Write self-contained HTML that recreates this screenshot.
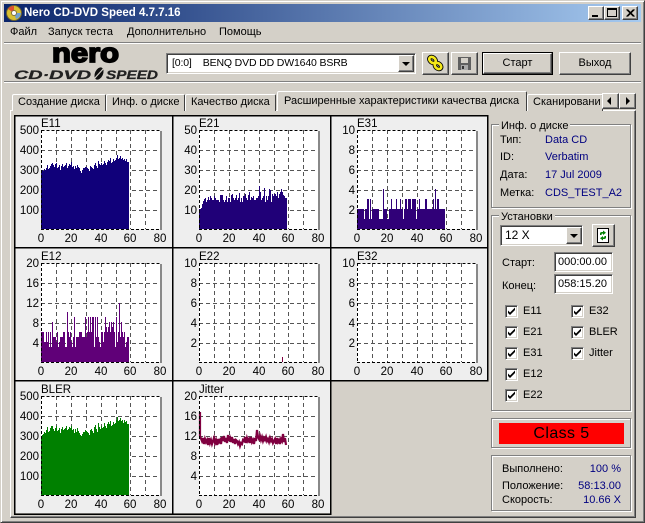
<!DOCTYPE html>
<html><head><meta charset="utf-8"><style>
html,body{margin:0;padding:0;background:#d4d0c8;}
body{width:645px;height:523px;position:relative;overflow:hidden;font:11px/13px "Liberation Sans",sans-serif;color:#000;}
div,span.a{position:absolute;box-sizing:border-box;white-space:nowrap;}
.rai{background:#d4d0c8;border:1px solid;border-color:#fff #404040 #404040 #fff;box-shadow:inset -1px -1px 0 #808080;}
.sun{background:#fff;border:1px solid;border-color:#808080 #fff #fff #808080;box-shadow:inset 1px 1px 0 #404040,inset -1px -1px 0 #d4d0c8;}
.grp{border:1px solid #808080;box-shadow:1px 1px 0 #fff,inset 1px 1px 0 #fff;}
.leg{background:#d4d0c8;padding:0 2px;}
.tab{background:#d4d0c8;border-left:1px solid #fff;border-top:1px solid #fff;border-right:1px solid #404040;border-radius:2px 2px 0 0;padding-left:5px;line-height:15px;overflow:hidden;}
.sep{left:4px;width:637px;height:2px;background:#808080;border-bottom:1px solid #fff;}
.cb{width:13px;height:13px;background:#fff;border:1px solid;border-color:#808080 #fff #fff #808080;box-shadow:inset 1px 1px 0 #404040,inset -1px -1px 0 #d4d0c8;}
.blue{color:#000080;}
.t{font-size:11.5px;fill:#000;font-family:"Liberation Sans",sans-serif;}
.e{text-anchor:end}.m{text-anchor:middle}
.bar{shape-rendering:crispEdges}
</style></head><body>
<div style="left:0;top:0;width:645px;height:523px;border:1px solid;border-color:#d4d0c8 #404040 #404040 #d4d0c8;box-shadow:inset 1px 1px 0 #fff,inset -1px -1px 0 #808080;"></div>

<div style="left:4px;top:4px;width:637px;height:18px;background:linear-gradient(90deg,#0a246a,#a6caf0);"></div>
<svg style="position:absolute;left:5px;top:4px" width="18" height="18" viewBox="0 0 18 18"><circle cx="9" cy="9" r="7.5" fill="#d8c030" stroke="#6a6030"/><path d="M9 9L3 5A7 7 0 0 1 9 2Z" fill="#e05030"/><path d="M9 9L16 9A7 7 0 0 1 11 15Z" fill="#70a0d0"/><circle cx="9" cy="9" r="2.5" fill="#fff" stroke="#807040"/></svg>
<div style="left:24px;top:6px;color:#fff;font:bold 11.5px/14px 'Liberation Sans',sans-serif;">Nero CD-DVD Speed 4.7.7.16</div>
<div class="rai" style="left:588px;top:6px;width:16px;height:14px;"><div style="left:3px;top:8px;width:6px;height:2px;background:#000"></div></div>
<div class="rai" style="left:604px;top:6px;width:16px;height:14px;"><div style="left:2px;top:1px;width:10px;height:9px;border:1px solid #000;border-top-width:2px"></div></div>
<div class="rai" style="left:622px;top:6px;width:16px;height:14px;"><svg style="position:absolute;left:3px;top:2px" width="9" height="8"><path d="M0.5 0.5L7.5 7.5M1.5 .5L8.5 7.5M7.5 .5L.5 7.5M8.5 .5L1.5 7.5" stroke="#000" fill="none"/></svg></div>

<div style="left:10px;top:26px;">Файл</div>
<div style="left:48px;top:26px;">Запуск теста</div>
<div style="left:127px;top:26px;">Дополнительно</div>
<div style="left:219px;top:26px;">Помощь</div>
<div class="sep" style="top:42px;"></div>

<svg style="position:absolute;left:10px;top:42px" width="160" height="40">
<text x="42" y="20" textLength="67" lengthAdjust="spacingAndGlyphs" style="font:bold 27px 'Liberation Sans',sans-serif;stroke:#000;stroke-width:1.7px;">nero</text>
<text x="4" y="37" textLength="77" lengthAdjust="spacingAndGlyphs" style="font:italic bold 12px 'Liberation Sans',sans-serif;fill:#222;stroke:#222;stroke-width:.3px">CD·DVD</text>
<ellipse cx="89" cy="31.5" rx="4" ry="6.5" transform="rotate(25 89 31.5)" fill="#111"/>
<path d="M84 37L94 26" stroke="#d4d0c8" stroke-width="1.2"/>
<text x="96" y="37" textLength="52" lengthAdjust="spacingAndGlyphs" style="font:italic bold 12px 'Liberation Sans',sans-serif;fill:#222;stroke:#222;stroke-width:.3px">SPEED</text>
</svg>
<div class="sep" style="top:81px;"></div>

<div class="sun" style="left:166px;top:53px;width:250px;height:21px;"></div>
<div style="left:172px;top:57px;font-size:10.5px;letter-spacing:-.15px;">[0:0]&nbsp;&nbsp;&nbsp; BENQ DVD DD DW1640 BSRB</div>
<div class="rai" style="left:398px;top:55px;width:16px;height:17px;"><div style="left:3px;top:6px;border:4px solid transparent;border-top:4px solid #000;border-bottom:0"></div></div>
<div class="rai" style="left:422px;top:52px;width:27px;height:23px;"></div>
<svg style="position:absolute;left:426px;top:54px" width="20" height="19"><ellipse cx="6.5" cy="6" rx="3.6" ry="2.6" transform="rotate(40 6.5 6)" fill="none" stroke="#000" stroke-width="4.4"/><ellipse cx="12" cy="12" rx="3.6" ry="2.6" transform="rotate(40 12 12)" fill="none" stroke="#000" stroke-width="4.4"/><ellipse cx="6.5" cy="6" rx="3.6" ry="2.6" transform="rotate(40 6.5 6)" fill="none" stroke="#f4e818" stroke-width="2.6"/><ellipse cx="12" cy="12" rx="3.6" ry="2.6" transform="rotate(40 12 12)" fill="none" stroke="#f4e818" stroke-width="2.6"/></svg>
<div class="rai" style="left:451px;top:52px;width:27px;height:23px;"></div>
<svg style="position:absolute;left:458px;top:57px" width="14" height="14" shape-rendering="crispEdges"><path d="M0 0H13V13H0Z" fill="#606060"/><path d="M3 1H10V6H3Z" fill="#d4d0c8"/><path d="M3 8H10V13H3Z" fill="#a8a8a8"/><path d="M4 9H6V12H4Z" fill="#333"/></svg>
<div style="left:482px;top:52px;width:71px;height:23px;border:1px solid #000;"></div>
<div class="rai" style="left:483px;top:53px;width:69px;height:21px;text-align:center;line-height:19px;">Старт</div>
<div class="rai" style="left:559px;top:52px;width:72px;height:23px;text-align:center;line-height:21px;">Выход</div>

<!-- tab panel -->
<div style="left:10px;top:110px;width:626px;height:408px;border:1px solid;border-color:#fff #404040 #404040 #fff;box-shadow:inset -1px -1px 0 #808080;"></div>
<div class="tab" style="left:12px;top:94px;width:94px;height:17px;">Создание диска</div>
<div class="tab" style="left:106px;top:94px;width:79px;height:17px;">Инф. о диске</div>
<div class="tab" style="left:185px;top:94px;width:91px;height:17px;">Качество диска</div>
<div class="tab" style="left:277px;top:91px;width:250px;height:20px;padding-left:6px;line-height:19px;z-index:2;">Расширенные характеристики качества диска</div>
<div class="tab" style="left:527px;top:94px;width:76px;height:17px;">Сканировани</div>
<div class="rai" style="left:602px;top:93px;width:17px;height:16px;"><div style="left:4px;top:3px;border:4px solid transparent;border-right:4px solid #000;border-left:0"></div></div>
<div class="rai" style="left:619px;top:93px;width:17px;height:16px;"><div style="left:6px;top:3px;border:4px solid transparent;border-left:4px solid #000;border-right:0"></div></div>

<!-- charts -->
<svg style="position:absolute;left:0;top:0" width="645" height="523">
<defs>
<g id="grid" fill="none" stroke="#555" stroke-dasharray="4 3" shape-rendering="crispEdges">
<path d="M15.5 0V99M30.5 0V99M45.5 0V99M60.5 0V99M75.5 0V99M89.5 0V99M104.5 0V99M0 20.5H119M0 40.5H119M0 60.5H119M0 80.5H119"/>
</g>
<g id="frame" fill="none" shape-rendering="crispEdges">
<path d="M0.5 0.5H119M0.5 0V99" stroke="#000" stroke-dasharray="3 2"/>
<path d="M0 99.5H119" stroke="#000" stroke-dasharray="3 2"/>
<path d="M119.5 1V100M120.5 1V100" stroke="#888"/>
</g>
<g id="xax"><text class="t m" x="0" y="112">0</text><text class="t m" x="30" y="112">20</text><text class="t m" x="60" y="112">40</text><text class="t m" x="89" y="112">60</text><text class="t m" x="119" y="112">80</text></g>
</defs>
<rect x="15" y="116" width="472" height="264" fill="#eee"/>
<rect x="15" y="248" width="315" height="265" fill="#eee"/>
<g fill="none" stroke="#000" stroke-width="1.5">
<path d="M14.75 115V514.25H330.75V115M172.75 115V514M487.75 115V380.75M14 115.75H488.5M14 247.75H488.5M14 380.75H488.5"/>
</g>

<g transform="translate(41,130)"><rect width="119" height="99" fill="#fff"/><use href="#grid"/>
<path class="bar" fill="#10007a" d="M0 99V42h1V40h1V41h1V39h1V40h1V38h1V35h1V39h1V38h1V36h1V34h1V33h1V35h1V37h1V34h1V33h1V38h1V37h1V35h1V40h1V36h1V34h1V37h1V36h1V35h1V33h1V38h1V36h1V34h1V35h1V32h1V37h1V36h1V39h1V36h1V38h1V35h1V37h1V38h1V41h1V43h1V40h1V38h1V38h1V37h1V37h1V38h1V39h1V41h1V36h1V37h1V38h1V39h1V35h1V33h1V36h1V38h1V31h1V34h1V35h1V33h1V35h1V34h1V31h1V33h1V35h1V32h1V30h1V31h1V28h1V33h1V32h1V29h1V31h1V30h1V28h1V25h1V29h1V28h1V26h1V29h1V28h1V30h1V29h1V31h1V29h1V32h2V99Z"/>
<use href="#frame"/><text class="t" x="0" y="-3">E11</text>
<text class="t e" x="-2" y="4">500</text><text class="t e" x="-2" y="24">400</text><text class="t e" x="-2" y="44">300</text><text class="t e" x="-2" y="64">200</text><text class="t e" x="-2" y="84">100</text><use href="#xax"/></g>

<g transform="translate(199,130)"><rect width="119" height="99" fill="#fff"/><use href="#grid"/>
<path class="bar" fill="#200078" d="M0 99V79h1V79h1V78h1V74h1V71h1V69h1V68h1V72h1V70h1V67h1V70h1V66h1V68h1V70h1V70h1V66h1V68h1V70h1V70h1V70h1V72h1V65h1V65h1V65h1V70h1V72h1V70h1V66h1V72h1V68h1V68h1V72h1V65h1V64h1V68h1V70h1V68h1V65h1V70h1V68h1V63h1V72h1V68h1V72h1V66h1V66h1V64h1V68h1V70h1V65h1V62h1V70h1V67h1V68h1V66h1V70h1V70h1V68h1V68h1V66h1V56h1V62h1V70h1V68h1V66h1V58h1V72h1V66h1V70h1V66h1V59h1V60h1V72h1V64h1V66h1V64h1V64h1V66h1V62h1V68h1V64h1V62h1V59h1V62h1V65h1V66h1V68h2V99Z"/>
<use href="#frame"/><text class="t" x="0" y="-3">E21</text>
<text class="t e" x="-2" y="4">50</text><text class="t e" x="-2" y="24">40</text><text class="t e" x="-2" y="44">30</text><text class="t e" x="-2" y="64">20</text><text class="t e" x="-2" y="84">10</text><use href="#xax"/></g>

<g transform="translate(357,130)"><rect width="119" height="99" fill="#fff"/><use href="#grid"/>
<path class="bar" fill="#300078" d="M0 99V79H7V89H8V79H10V69H12V89H13V69H14V89H15V79H22V89H26V59H27V79H30V89H32V79H34V69H35V79H39V69H40V79H43V69H44V79H46V89H47V79H48V69H50V79H51V69H54V79H55V69H59V89H60V79H62V69H63V79H68V69H70V79H76V69H77V79H78V59H79V79H80V69H82V79H88V99Z"/>
<use href="#frame"/><text class="t" x="0" y="-3">E31</text>
<text class="t e" x="-2" y="4">10</text><text class="t e" x="-2" y="24">8</text><text class="t e" x="-2" y="44">6</text><text class="t e" x="-2" y="64">4</text><text class="t e" x="-2" y="84">2</text><use href="#xax"/></g>

<g transform="translate(41,263)"><rect width="119" height="99" fill="#fff"/><use href="#grid"/>
<path class="bar" fill="#600078" d="M0 99V69h1V69h1V69h1V79h1V79h1V69h1V79h1V69h1V84h1V69h1V84h1V59h1V74h1V74h1V74h1V79h1V69h1V84h1V79h1V74h1V74h1V74h1V69h1V69h1V84h1V84h1V49h1V69h1V74h1V69h1V79h1V84h1V74h1V54h1V84h1V74h1V74h1V74h1V69h1V69h1V69h1V74h1V74h1V74h1V54h1V74h1V69h1V54h1V69h1V54h1V69h1V54h1V54h1V84h1V54h1V74h1V54h1V74h1V79h1V84h1V69h1V69h1V79h1V69h1V54h1V64h1V69h1V64h1V59h1V69h1V59h1V64h1V59h1V69h1V84h1V54h1V79h1V69h1V40h1V74h1V59h1V69h1V74h1V69h1V84h1V79h1V74h2V99Z"/>
<use href="#frame"/><text class="t" x="0" y="-3">E12</text>
<text class="t e" x="-2" y="4">20</text><text class="t e" x="-2" y="24">16</text><text class="t e" x="-2" y="44">12</text><text class="t e" x="-2" y="64">8</text><text class="t e" x="-2" y="84">4</text><use href="#xax"/></g>

<g transform="translate(199,263)"><rect width="119" height="99" fill="#fff"/><use href="#grid"/>
<path d="M83.5 94V99" stroke="#800040"/>
<use href="#frame"/><text class="t" x="0" y="-3">E22</text>
<text class="t e" x="-2" y="4">10</text><text class="t e" x="-2" y="24">8</text><text class="t e" x="-2" y="44">6</text><text class="t e" x="-2" y="64">4</text><text class="t e" x="-2" y="84">2</text><use href="#xax"/></g>

<g transform="translate(357,263)"><rect width="119" height="99" fill="#fff"/><use href="#grid"/>
<use href="#frame"/><text class="t" x="0" y="-3">E32</text>
<text class="t e" x="-2" y="4">10</text><text class="t e" x="-2" y="24">8</text><text class="t e" x="-2" y="44">6</text><text class="t e" x="-2" y="64">4</text><text class="t e" x="-2" y="84">2</text><use href="#xax"/></g>

<g transform="translate(41,396)"><rect width="119" height="99" fill="#fff"/><use href="#grid"/>
<path class="bar" fill="#008000" d="M0 99V41h1V39h1V38h1V36h1V37h1V34h1V31h1V36h1V35h1V32h1V30h1V30h1V33h1V35h1V32h1V30h1V35h1V34h1V32h1V37h1V33h1V31h1V34h1V33h1V32h1V30h1V34h1V33h1V31h1V32h1V30h1V34h1V33h1V37h1V33h1V36h1V32h1V35h1V37h1V39h1V40h1V38h1V36h1V36h1V34h1V35h1V36h1V37h1V39h1V34h1V33h1V35h1V37h1V31h1V29h1V33h1V36h1V27h1V31h1V33h1V30h1V32h1V31h1V27h1V30h1V32h1V28h1V26h1V28h1V25h1V30h1V29h1V26h1V28h1V27h1V24h1V21h1V25h1V24h1V22h1V25h1V24h1V27h1V24h1V26h1V25h1V28h2V99Z"/>
<use href="#frame"/><text class="t" x="0" y="-3">BLER</text>
<text class="t e" x="-2" y="4">500</text><text class="t e" x="-2" y="24">400</text><text class="t e" x="-2" y="44">300</text><text class="t e" x="-2" y="64">200</text><text class="t e" x="-2" y="84">100</text><use href="#xax"/></g>

<g transform="translate(199,396)"><rect width="119" height="99" fill="#fff"/><use href="#grid"/>
<path transform="translate(0,-2)" fill="none" stroke="#800040" stroke-width="2.2" d="M1 18L1 42L3 47L4 44L5 50L6 45L7 48L8 46L9 51L10 44L11 49L12 46L13 50L14 47L15 44L16 49L17 46L18 51L19 45L20 48L21 46L22 50L23 43L24 47L25 42L26 48L27 44L28 49L29 41L30 47L31 44L32 48L33 43L34 49L35 45L36 50L37 46L38 47L39 50L40 48L41 52L42 49L43 50L44 46L45 47L46 43L47 49L48 44L49 47L50 45L51 49L52 43L53 48L54 46L55 50L56 44L57 47L58 36L59 43L60 45L61 42L62 46L63 43L64 47L65 44L66 46L67 43L68 47L69 45L70 48L71 44L72 47L73 45L74 49L75 47L76 45L77 50L78 44L79 48L80 46L81 50L82 45L83 47L84 40L85 48L86 44L87 51"/>
<use href="#frame"/><text class="t" x="0" y="-3">Jitter</text>
<text class="t e" x="-2" y="4">20</text><text class="t e" x="-2" y="24">16</text><text class="t e" x="-2" y="44">12</text><text class="t e" x="-2" y="64">8</text><text class="t e" x="-2" y="84">4</text><use href="#xax"/></g>
</svg>

<!-- right panel -->
<div class="grp" style="left:491px;top:124px;width:140px;height:84px;"></div>
<div class="leg" style="left:499px;top:120px;">Инф. о диске</div>
<div style="left:500px;top:134px;">Тип:</div><div class="blue" style="left:545px;top:134px;">Data CD</div>
<div style="left:500px;top:151px;">ID:</div><div class="blue" style="left:545px;top:151px;">Verbatim</div>
<div style="left:500px;top:169px;">Дата:</div><div class="blue" style="left:545px;top:169px;">17 Jul 2009</div>
<div style="left:500px;top:187px;">Метка:</div><div class="blue" style="left:545px;top:187px;">CDS_TEST_A2</div>

<div class="grp" style="left:491px;top:215px;width:140px;height:196px;"></div>
<div class="leg" style="left:499px;top:211px;">Установки</div>
<div class="sun" style="left:500px;top:225px;width:83px;height:21px;padding:3px 0 0 4px;font-size:12px;">12 X</div>
<div class="rai" style="left:566px;top:227px;width:16px;height:17px;"><div style="left:3px;top:6px;border:4px solid transparent;border-top:4px solid #000;border-bottom:0"></div></div>
<div class="rai" style="left:592px;top:224px;width:23px;height:23px;"></div>
<svg style="position:absolute;left:597px;top:228px" width="13" height="16"><rect x=".5" y=".5" width="11" height="14" fill="#fff" stroke="#000"/><path d="M3 7V5.5Q3 4 5 4H6V2.5L9 4.7L6 7V5.6H5Q4.6 5.6 4.6 6V7ZM9 8V9.5Q9 11 7 11H6V12.5L3 10.3L6 8V9.4H7Q7.4 9.4 7.4 9V8Z" fill="#008000"/></svg>
<div style="left:502px;top:257px;">Старт:</div>
<div class="sun" style="left:554px;top:252px;width:59px;height:20px;padding:3px 0 0 3px;">000:00.00</div>
<div style="left:502px;top:280px;">Конец:</div>
<div class="sun" style="left:554px;top:274px;width:59px;height:20px;padding:3px 0 0 3px;">058:15.20</div>

<svg width="0" height="0" style="position:absolute"><defs><path id="ck" d="M3 5.5L5 7.5L10 2.5V5L5 10L3 8Z" fill="#000"/></defs></svg>
<div class="cb" style="left:505px;top:305px;"><svg width="11" height="11" style="position:absolute;left:-1px;top:-1px"><use href="#ck"/></svg></div><div style="left:523px;top:305px;">E11</div>
<div class="cb" style="left:505px;top:326px;"><svg width="11" height="11" style="position:absolute;left:-1px;top:-1px"><use href="#ck"/></svg></div><div style="left:523px;top:326px;">E21</div>
<div class="cb" style="left:505px;top:347px;"><svg width="11" height="11" style="position:absolute;left:-1px;top:-1px"><use href="#ck"/></svg></div><div style="left:523px;top:347px;">E31</div>
<div class="cb" style="left:505px;top:368px;"><svg width="11" height="11" style="position:absolute;left:-1px;top:-1px"><use href="#ck"/></svg></div><div style="left:523px;top:368px;">E12</div>
<div class="cb" style="left:505px;top:389px;"><svg width="11" height="11" style="position:absolute;left:-1px;top:-1px"><use href="#ck"/></svg></div><div style="left:523px;top:389px;">E22</div>
<div class="cb" style="left:571px;top:305px;"><svg width="11" height="11" style="position:absolute;left:-1px;top:-1px"><use href="#ck"/></svg></div><div style="left:589px;top:305px;">E32</div>
<div class="cb" style="left:571px;top:326px;"><svg width="11" height="11" style="position:absolute;left:-1px;top:-1px"><use href="#ck"/></svg></div><div style="left:589px;top:326px;">BLER</div>
<div class="cb" style="left:571px;top:347px;"><svg width="11" height="11" style="position:absolute;left:-1px;top:-1px"><use href="#ck"/></svg></div><div style="left:589px;top:347px;">Jitter</div>

<div class="grp" style="left:491px;top:418px;width:140px;height:30px;"></div>
<div style="left:499px;top:423px;width:125px;height:21px;background:#f00;text-align:center;font:16px/21px 'Liberation Sans',sans-serif;letter-spacing:.4px;">Class 5</div>

<div class="grp" style="left:491px;top:455px;width:140px;height:56px;"></div>
<div style="left:502px;top:463px;">Выполнено:</div><div class="blue" style="right:24px;top:463px;">100 %</div>
<div style="left:502px;top:480px;">Положение:</div><div class="blue" style="right:24px;top:480px;">58:13.00</div>
<div style="left:502px;top:494px;">Скорость:</div><div class="blue" style="right:24px;top:494px;">10.66 X</div>
</body></html>
